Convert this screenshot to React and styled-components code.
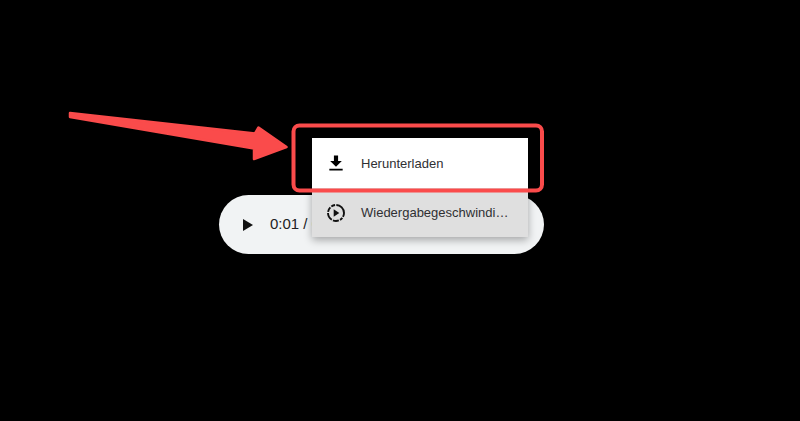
import React from "react";
import styled, { createGlobalStyle } from "styled-components";

const Global = createGlobalStyle`
  html, body { margin: 0; padding: 0; background: #000; }
  body { width: 800px; height: 421px; overflow: hidden; font-family: "Liberation Sans", Arial, sans-serif; }
`;

const Stage = styled.div`
  position: relative;
  width: 800px;
  height: 421px;
  padding: 195px 0 0 219px;
  box-sizing: border-box;
  background: #000;
`;

const Player = styled.div`
  width: 325px;
  height: 59px;
  border-radius: 30px;
  background: #f1f3f4;
  display: flex;
  align-items: center;
  gap: 16px;
  padding-left: 23px;
  box-sizing: border-box;
`;

const Time = styled.span`
  font-size: 15px;
  color: #202124;
  white-space: nowrap;
  padding-bottom: 2px;
`;

const Menu = styled.div`
  position: absolute;
  left: 312px;
  top: 138px;
  width: 216px;
  display: flex;
  flex-direction: column;
  box-shadow: 0 3px 8px rgba(0, 0, 0, 0.32);
`;

const MenuItem = styled.div`
  height: ${(p) => (p.$active ? "50px" : "49px")};
  display: flex;
  align-items: center;
  gap: 15px;
  padding-left: 14px;
  box-sizing: border-box;
  background: ${(p) => (p.$active ? "#fff" : "#dfdfdf")};
  color: #2f3033;
  font-size: 13px;
`;

const Label = styled.span`
  white-space: nowrap;
`;

const Annotation = styled.svg`
  position: absolute;
  left: 0;
  top: 0;
  pointer-events: none;
`;

const PlayIcon = () => (
  <svg width="12" height="14" viewBox="0 0 12 14" style={{ flex: "none" }}>
    <path d="M1 1v12l10-6z" fill="#111" />
  </svg>
);

const DownloadIcon = () => (
  <svg width="20" height="20" viewBox="0 0 24 24" style={{ flex: "none" }}>
    <path d="M19 9.500h-4.500V3h-5v6.500H5l7 7 7-7zM4 19v2h16v-2H4z" fill="#000" />
  </svg>
);

const SpeedIcon = () => (
  <svg width="20" height="20" viewBox="0 0 20 20" style={{ flex: "none" }}>
    <circle cx="10" cy="10" r="8" fill="none" stroke="#111" strokeWidth="1.900" strokeDasharray="4 1.300 3 1.300 6 1.300 8 1.300 5 1.300 4 1.300 12 0" />
    <path d="M7.700 6.300v7.400l5.600-3.700z" fill="#111" />
  </svg>
);

export default function App() {
  return (
    <Stage>
      <Global />
      <Player>
        <PlayIcon />
        <Time>0:01 / 0:05</Time>
      </Player>
      <Menu>
        <MenuItem $active>
          <DownloadIcon />
          <Label>Herunterladen</Label>
        </MenuItem>
        <MenuItem>
          <SpeedIcon />
          <Label>Wiedergabegeschwindi…</Label>
        </MenuItem>
      </Menu>
      <Annotation width="800" height="421" viewBox="0 0 800 421">
        <rect x="293.500" y="125.500" width="248.500" height="65" rx="6" fill="none" stroke="#fa4b4b" strokeWidth="4" />
        <path
          d="M70 113L255 133.500L258.500 127.500L286.500 147L254 159L254 148.500L70 117Z"
          fill="#fa4b4b"
          stroke="#fa4b4b"
          strokeWidth="2.500"
          strokeLinejoin="round"
        />
      </Annotation>
    </Stage>
  );
}
